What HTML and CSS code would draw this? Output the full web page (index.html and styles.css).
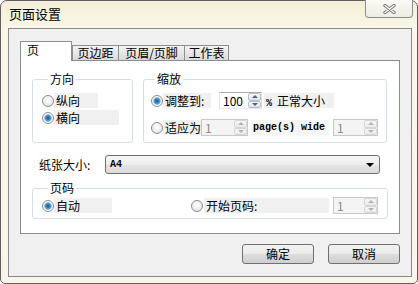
FILE: index.html
```html
<!DOCTYPE html>
<html lang="zh">

<head>
    <meta charset="UTF-8">
    <title>页面设置</title>
    <link rel="stylesheet" href="styles.css">
</head>

<body>
    <div class="window">
        <div class="titlebar">
            <span class="title">页面设置</span>
            <span class="close">
                <svg width="13" height="10" viewBox="0 0 13 10">
                    <path d="M2 1.5 L11 8.5 M11 1.5 L2 8.5" stroke="#7b7b7b" stroke-width="3.4" stroke-linecap="round" fill="none" />
                    <path d="M2 1.5 L11 8.5 M11 1.5 L2 8.5" stroke="#fafafa" stroke-width="1.4" stroke-linecap="round" fill="none" />
                </svg>
            </span>
        </div>

        <div class="client">
            <div class="tabs">
                <div class="tab active">页</div>
                <div class="tab t-margin">页边距</div>
                <div class="tab t-header">页眉/页脚</div>
                <div class="tab t-sheet">工作表</div>
            </div>

            <div class="panel">
                <div class="groups">
                    <fieldset class="group orient">
                        <legend>方向</legend>
                        <div class="opt"><span class="radio"></span><span class="lbl w-portrait">纵向</span></div>
                        <div class="opt"><span class="radio on"></span><span class="lbl w-landscape">横向</span></div>
                    </fieldset>

                    <fieldset class="group scale">
                        <legend>缩放</legend>
                        <div class="row">
                            <span class="radio on"></span>
                            <span class="lbl w-adjust">调整到:</span>
                            <span class="spin s-percent"><span class="val">100</span><span class="arrows"><i class="up"></i><i class="dn"></i></span></span>
                            <span class="lbl w-normal"><span class="mono pct">%</span>正常大小</span>
                        </div>
                        <div class="row">
                            <span class="radio"></span>
                            <span class="lbl w-fit">适应为</span>
                            <span class="spin off s-wide"><span class="val">1</span><span class="arrows"><i class="up"></i><i class="dn"></i></span></span>
                            <span class="lbl mono w-pages">page(s) wide</span>
                            <span class="spin off s-tall"><span class="val">1</span><span class="arrows"><i class="up"></i><i class="dn"></i></span></span>
                        </div>
                    </fieldset>
                </div>

                <div class="paper">
                    <span class="paper-label">纸张大小:</span>
                    <div class="combo">
                        <span class="mono">A4</span>
                        <span class="caret"></span>
                    </div>
                </div>

                <fieldset class="group pages">
                    <legend>页码</legend>
                    <div class="row">
                        <span class="radio on"></span>
                        <span class="lbl w-auto">自动</span>
                        <span class="radio r-start"></span>
                        <span class="lbl w-start">开始页码:</span>
                        <span class="spin off s-start"><span class="val">1</span><span class="arrows"><i class="up"></i><i class="dn"></i></span></span>
                    </div>
                </fieldset>
            </div>

            <div class="buttons">
                <div class="btn">确定</div>
                <div class="btn">取消</div>
            </div>
        </div>
    </div>
</body>

</html>
```

FILE: styles.css
```css
body {
    margin: 0;
    font-family: "Noto Sans CJK SC", "Noto Sans", sans-serif;
    font-size: 12px;
    color: #000;
    background: #fff;
}

.window {
    box-sizing: border-box;
    width: 418px;
    height: 284px;
    border: 1px solid #5f5f5f;
    border-radius: 7px 7px 5px 5px;
    background: linear-gradient(180deg, #f3eed8 0, #faf7e9 28px, #f8f6ec 100%);
    display: flex;
    flex-direction: column;
}

.titlebar {
    height: 27px;
    display: flex;
    justify-content: space-between;
    align-items: flex-start;
    padding-left: 8px;
}

.title {
    font-size: 13px;
    line-height: 14px;
    margin-top: 6px;
}

.close {
    box-sizing: border-box;
    width: 48px;
    height: 18px;
    margin: -1px 4px 0 0;
    border: 1px solid #8d8d8d;
    border-top: none;
    border-radius: 0 0 4px 4px;
    background: linear-gradient(#fbfaf4, #eeede2);
    display: flex;
    align-items: center;
    justify-content: center;
}

.client {
    flex: 1;
    margin: 0 5px 6px 7px;
    border: 1px solid #898989;
    background: #f0f0f0;
    padding: 12px 11px 0;
    display: flex;
    flex-direction: column;
}

/* tabs */
.tabs {
    display: flex;
    align-items: flex-end;
    height: 20px;
    margin-bottom: -1px;
    position: relative;
    z-index: 1;
}

.tab {
    box-sizing: border-box;
    height: 15px;
    margin-bottom: 1px;
    border: 1px solid #8e8f8f;
    border-right: none;
    border-bottom: none;
    background: linear-gradient(#f3f3f3, #dadada);
    text-align: center;
    line-height: 14px;
}

.tab.active {
    width: 52px;
    height: 20px;
    margin-bottom: 0;
    border-right: 1px solid #8e8f8f;
    background: #fff;
    text-align: left;
    padding-left: 6px;
    line-height: 15px;
}

.t-margin {
    width: 46px;
}

.t-header {
    width: 66px;
}

.t-sheet {
    width: 45px;
    border-right: 1px solid #8e8f8f;
}

.panel {
    box-sizing: border-box;
    height: 174px;
    border: 1px solid #898c95;
    background: #fff;
    padding: 11px 11px 0 11px;
}

/* group boxes */
.groups {
    display: flex;
    gap: 10px;
}

.group {
    box-sizing: border-box;
    margin: 0;
    min-width: 0;
    border: 1px solid #d5dfe5;
    border-radius: 3px;
}

.group legend {
    padding: 0 2px;
    margin-left: 6px;
    line-height: 14px;
}

.orient {
    width: 101px;
    padding: 7px 0 17px 9px;
}

.scale {
    width: 244px;
    padding: 6px 0 6px 7px;
}

.scale legend {
    margin-left: 4px;
}

.pages {
    width: 356px;
    margin-top: 7px;
    padding: 2px 0 4px 9px;
}

.opt {
    display: flex;
    align-items: center;
    height: 15px;
}

.opt + .opt {
    margin-top: 2px;
}

.row {
    display: flex;
    align-items: center;
    height: 17px;
}

.row + .row {
    margin-top: 10px;
}

.radio {
    flex: none;
    box-sizing: border-box;
    width: 12px;
    height: 12px;
    border-radius: 50%;
    border: 1px solid #8d8d8d;
    background: radial-gradient(circle at 50% 40%, #ffffff 0, #ececec 60%, #d0d0d0 100%);
}

.radio.on {
    background: radial-gradient(circle, #1d5b8a 0, #2f79b4 1.5px, #5aa6dc 3px, #9ccbee 3.6px, #ffffff 4.2px, #e9e9e9 100%);
}

.lbl {
    box-sizing: border-box;
    height: 15px;
    line-height: 15px;
    padding-left: 2px;
    background: #f0f0f0;
    white-space: nowrap;
}

.mono {
    font-family: "Liberation Mono", monospace;
    font-size: 10px;
    font-weight: bold;
}

.pct {
    margin-right: 5px;
}

.w-portrait {
    width: 44px;
}

.w-landscape {
    width: 65px;
}

.w-adjust {
    width: 48px;
}

.w-normal {
    width: 70px;
    margin-left: 2px;
}

.w-fit {
    width: 38px;
}

.w-pages {
    width: 78px;
    margin-left: 3px;
    background: #f6f6f6;
}

.w-auto {
    width: 58px;
}

.r-start {
    margin-left: 79px;
}

.w-start {
    width: 125px;
    margin-left: 1px;
}

/* spin boxes */
.spin {
    box-sizing: border-box;
    display: flex;
    height: 17px;
    border: 1px solid;
    border-color: #abadb3 #dbdfe6 #e3e9ef #e2e3ea;
    background: #fff;
}

.spin .val {
    flex: 1;
    padding-left: 3px;
    line-height: 15px;
}

.arrows {
    width: 13px;
    display: flex;
    flex-direction: column;
}

.arrows i {
    flex: 1;
    border: 1px solid #b7bfcb;
    border-radius: 2px;
    background: linear-gradient(#f7f8fa, #dfe4ec);
    display: flex;
    align-items: center;
    justify-content: center;
}

.arrows i::after {
    content: "";
    border-left: 3px solid transparent;
    border-right: 3px solid transparent;
}

.arrows .up::after {
    border-bottom: 3px solid #4d6185;
}

.arrows .dn::after {
    border-top: 3px solid #4d6185;
}

.spin.off {
    border-color: #c9c9c9;
    background: #f4f4f4;
    color: #8a8a8a;
}

.spin.off .arrows i {
    border-color: #d6d6d6;
    background: linear-gradient(#f7f7f7, #ececec);
}

.spin.off .arrows .up::after {
    border-bottom-color: #b3b3b3;
}

.spin.off .arrows .dn::after {
    border-top-color: #b3b3b3;
}

.s-percent {
    width: 43px;
    margin-left: 8px;
}

.s-wide {
    width: 47px;
}

.s-tall {
    width: 45px;
    margin-left: 4px;
}

.s-start {
    width: 45px;
    margin-left: 4px;
}

/* paper size */
.paper {
    display: flex;
    align-items: center;
    margin-top: 12px;
    padding-left: 7px;
}

.paper-label {
    width: 66px;
}

.combo {
    box-sizing: border-box;
    width: 275px;
    height: 19px;
    border: 1px solid #707070;
    border-radius: 3px;
    background: linear-gradient(#f6f6f6 0, #eeeeee 50%, #e4e4e4 51%, #dcdcdc 100%);
    display: flex;
    align-items: center;
    justify-content: space-between;
    padding: 0 5px 0 4px;
}

.caret {
    border-left: 4px solid transparent;
    border-right: 4px solid transparent;
    border-top: 4px solid #000;
}

/* dialog buttons */
.buttons {
    display: flex;
    justify-content: flex-end;
    gap: 14px;
    margin-top: 10px;
}

.btn {
    box-sizing: border-box;
    width: 72px;
    height: 20px;
    border: 1px solid #707070;
    border-radius: 3px;
    background: linear-gradient(#f2f2f2 0, #ebebeb 50%, #dddddd 50%, #cfcfcf 100%);
    text-align: center;
    line-height: 18px;
}
```
